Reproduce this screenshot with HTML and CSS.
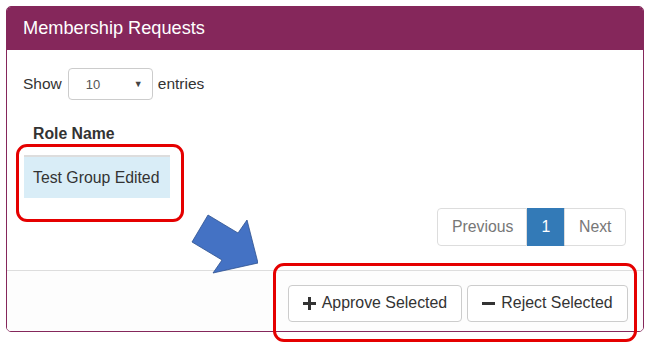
FILE: index.html
```html
<!DOCTYPE html>
<html>
<head>
<meta charset="utf-8">
<link rel="stylesheet" href="styles.css">
</head>
<body>
<div class="stage">
  <div class="panel">
    <div class="panel-heading">Membership Requests</div>
    <div class="panel-body">
      <div class="length">
        <span>Show</span>
        <div class="select"><span>10</span><span class="caret">&#9660;</span></div>
        <span>entries</span>
      </div>
      <table class="grid">
        <thead><tr><th>Role Name</th></tr></thead>
        <tbody><tr class="info"><td>Test Group Edited</td></tr></tbody>
      </table>
      <div class="pager-row">
        <ul class="pagination">
          <li class="off">Previous</li>
          <li class="active">1</li>
          <li class="off">Next</li>
        </ul>
      </div>
    </div>
    <div class="panel-footer">
      <button class="btn"><svg width="13" height="13" viewBox="0 0 13 13"><path d="M5 0h3v5h5v3H8v5H5V8H0V5h5z" fill="#333"/></svg>Approve Selected</button>
      <button class="btn"><svg width="13" height="13" viewBox="0 0 13 13"><path d="M0 5h13v3H0z" fill="#333"/></svg>Reject Selected</button>
    </div>
  </div>
  <div class="mark mark-row"></div>
  <div class="mark mark-buttons"></div>
  <svg class="arrow" width="70" height="64" viewBox="188 212 70 64">
    <polygon points="208,215 238,233 247,220 258,263 213,273 222,260 192,242" fill="#4472c4" stroke="#2f528f" stroke-width="0.8"/>
  </svg>
</div>
</body>
</html>
```

FILE: styles.css
```css
html, body { margin: 0; padding: 0; background: #fff; }
body { font-family: "Liberation Sans", Arial, sans-serif; color: #333; }
.stage { position: relative; width: 652px; height: 352px; padding: 6px 0 0 6px; box-sizing: border-box; }
.panel { width: 638px; border: 1px solid #85275b; border-radius: 5px; overflow: hidden; box-sizing: border-box; }
.panel-heading { background: #85275b; color: #fff; font-size: 18.2px; height: 43px; line-height: 43px; padding-left: 16px; }
.panel-body { padding: 18px 16px 24px 16px; }
.length { display: flex; align-items: center; font-size: 15.5px; gap: 5px; height: 32px; }
.select { width: 85px; height: 32px; box-sizing: border-box; border: 1px solid #ccc; border-radius: 4px; display: flex; align-items: center; justify-content: space-between; padding: 0 9px 0 17px; font-size: 13px; color: #555; margin-left: 1px; }
.caret { font-size: 9px; color: #444; }
.grid { border-collapse: collapse; margin: 20px 0 0 1px; width: 146px; font-size: 15.8px; }
.grid th { text-align: left; font-weight: bold; padding: 3px 9px 11px 9px; line-height: 21px; border-bottom: 2px solid #ddd; }
.grid td { padding: 11px 9px 10px 9px; line-height: 20px; background: #d9edf7; }
.pager-row { display: flex; justify-content: flex-end; margin-top: 10px; padding-right: 1px; }
.pagination { display: flex; list-style: none; margin: 0; padding: 0; font-size: 15.8px; }
.pagination li { height: 38px; box-sizing: border-box; line-height: 36px; border: 1px solid #ddd; padding: 0 14px; color: #777; }
.pagination li:first-child { border-radius: 4px 0 0 4px; width: 90px; text-align: center; }
.pagination li:last-child { border-radius: 0 4px 4px 0; margin-left: -1px; width: 62px; text-align: center; }
.pagination li.active { background: #337ab7; border-color: #337ab7; color: #fff; width: 38px; text-align: center; padding: 0; }
.panel-footer { background: #fdfdfd; border-top: 1px solid #ddd; height: 61px; box-sizing: border-box; display: flex; justify-content: flex-end; align-items: center; gap: 5px; padding: 4px 15px 0 0; }
.btn { font-family: "Liberation Sans", Arial, sans-serif; font-size: 15.9px; color: #333; background: #fff; border: 1px solid #ccc; border-radius: 4px; height: 37px; padding: 0; display: flex; align-items: center; justify-content: center; gap: 6px; white-space: nowrap; }
.btn:first-child { width: 174px; }
.btn:last-child { width: 161px; }
.mark { position: absolute; border: 3px solid #e50000; border-radius: 11px; box-sizing: border-box; }
.mark-row { left: 16px; top: 144px; width: 168px; height: 78px; }
.mark-buttons { left: 273px; top: 263px; width: 364px; height: 79px; }
.arrow { position: absolute; left: 188px; top: 212px; }
```
